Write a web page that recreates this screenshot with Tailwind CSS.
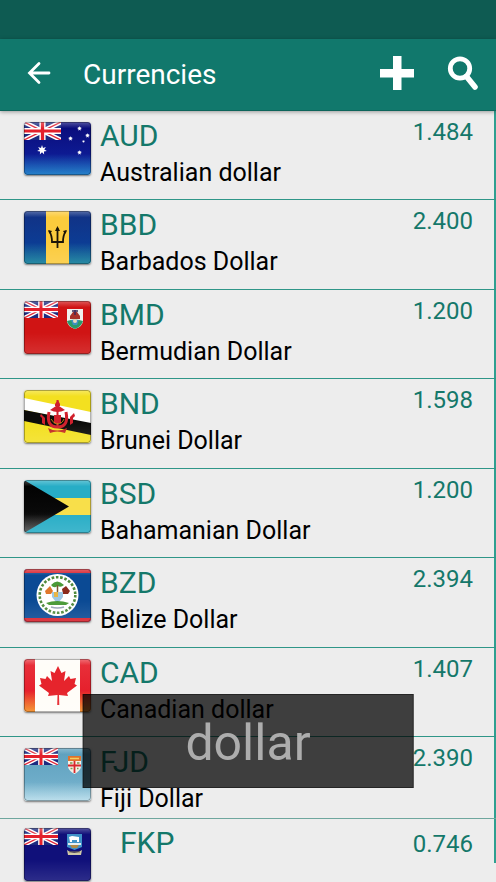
<!DOCTYPE html>
<html lang="en">
<head>
  <meta charset="UTF-8">
  <meta name="viewport" content="width=device-width, initial-scale=1">
  <title>Currencies</title>
  <script src="https://cdn.jsdelivr.net/npm/@tailwindcss/browser@4"></script>
</head>
<body class="bg-[#ededed] font-[Roboto,sans-serif] min-h-screen overflow-x-hidden">

  <!-- Shared flag parts (kept rendered at zero size so the gradients resolve) -->
  <svg class="absolute w-0 h-0" aria-hidden="true">
    <defs>
      <linearGradient id="gloss" x1="0" y1="0" x2="0" y2="1">
        <stop offset="0" stop-color="#fff" stop-opacity=".3"/>
        <stop offset=".12" stop-color="#fff" stop-opacity="0"/>
        <stop offset=".6" stop-color="#fff" stop-opacity="0"/>
        <stop offset="1" stop-color="#fff" stop-opacity=".12"/>
      </linearGradient>
      <linearGradient id="aud" x1="0" y1="0" x2="0" y2="1">
        <stop offset="0" stop-color="#0a0a78"/>
        <stop offset=".6" stop-color="#0d1a92"/>
        <stop offset="1" stop-color="#0a72c4"/>
      </linearGradient>
      <linearGradient id="bbd" x1="0" y1="0" x2="0" y2="1">
        <stop offset="0" stop-color="#123184"/>
        <stop offset=".6" stop-color="#0c3c94"/>
        <stop offset="1" stop-color="#0b7d98"/>
      </linearGradient>
      <linearGradient id="cad" x1="0" y1="0" x2="0" y2="1">
        <stop offset="0" stop-color="#e8323c"/>
        <stop offset=".6" stop-color="#e6202c"/>
        <stop offset="1" stop-color="#f48a1c"/>
      </linearGradient>
      <linearGradient id="fjd" x1="0" y1="0" x2="0" y2="1">
        <stop offset="0" stop-color="#5c9fbd"/>
        <stop offset=".65" stop-color="#6fadc9"/>
        <stop offset="1" stop-color="#b4dcea"/>
      </linearGradient>
      <linearGradient id="bsd" x1="0" y1="0" x2="0" y2="1">
        <stop offset="0" stop-color="#000"/>
        <stop offset=".65" stop-color="#0a0a0a"/>
        <stop offset="1" stop-color="#555"/>
      </linearGradient>
      <clipPath id="round"><rect width="67" height="53" rx="3"/></clipPath>
      <symbol id="jack" viewBox="0 0 36 18" preserveAspectRatio="none">
        <rect width="36" height="18" fill="#1c2a80"/>
        <path d="M0 0L36 18M36 0L0 18" stroke="#fff" stroke-width="4.4"/>
        <path d="M0 0L36 18M36 0L0 18" stroke="#e0283a" stroke-width="1.4"/>
        <path d="M18 0V18M0 9H36" stroke="#fff" stroke-width="6"/>
        <path d="M18 0V18M0 9H36" stroke="#e3202c" stroke-width="3.2"/>
      </symbol>
      <symbol id="star" viewBox="-10 -10 20 20">
        <path fill="#fff" d="M0-10L2-4.200L7.800-6.200L4.600-1L9.700 2.200L3.800 2.900L4.300 9L0 4.700L-4.300 9L-3.800 2.900L-9.700 2.200L-4.600-1L-7.800-6.200L-2-4.200Z"/>
      </symbol>
      <symbol id="finish" viewBox="0 0 67 53">
        <rect width="67" height="53" rx="3" fill="url(#gloss)"/>
        <rect x=".5" y=".5" width="66" height="52" rx="3" fill="none" stroke="#000" stroke-opacity=".3"/>
      </symbol>
    </defs>
  </svg>

  <!-- Status bar -->
  <div class="h-[39px] bg-[#0e5b52]"></div>

  <!-- Toolbar -->
  <header class="relative h-[72px] bg-[#11786c] border-b border-[#0d655b] shadow-[0_1px_4px_rgba(0,0,0,0.35)] text-white flex items-center pl-[26px] pr-4">
    <button type="button" aria-label="Back" class="mb-1">
      <svg class="w-[26px] h-[26px]" viewBox="0 0 26 26" fill="none" stroke="currentColor" stroke-width="2.800" stroke-linecap="round">
        <path d="M23 13H4M13 3.500L3.500 13L13 22.500"/>
      </svg>
    </button>
    <h1 class="ml-[31px] text-[28px] leading-9 flex-1">Currencies</h1>
    <button type="button" aria-label="Add currency" class="mb-1">
      <svg class="w-[34px] h-[34px]" viewBox="0 0 34 34" fill="currentColor">
        <path d="M13 0H21.500V13H34V21.500H21.500V34H13V21.500H0V13H13Z"/>
      </svg>
    </button>
    <button type="button" aria-label="Search" class="ml-8 mb-1">
      <svg class="w-[34px] h-[34px]" viewBox="0 0 34 34" fill="none" stroke="currentColor" stroke-linecap="round">
        <circle cx="14" cy="12.500" r="9.700" stroke-width="4.800"/>
        <path d="M20.500 20.500L29 31" stroke-width="5.600"/>
      </svg>
    </button>
  </header>

  <!-- Currency list -->
  <main>
    <ul class="text-[#14786a]">
      <li class="h-[89px] flex border-b border-[#2f9688]">
        <svg class="w-[67px] h-[53px] ml-6 mt-[11px] mr-[9px] shrink-0 rounded-[3px] shadow-[0_1px_2px_rgba(0,0,0,0.5)]" viewBox="0 0 67 53" role="img" aria-label="Australia">
          <g clip-path="url(#round)">
            <rect width="67" height="53" fill="url(#aud)"/>
            <use href="#jack" width="37" height="18"/>
            <use href="#star" x="13" y="23" width="10" height="10"/>
            <use href="#star" x="53" y="4" width="5" height="5"/>
            <use href="#star" x="44" y="14" width="5" height="5"/>
            <use href="#star" x="61" y="11" width="5" height="5"/>
            <use href="#star" x="53" y="28" width="5" height="5"/>
            <use href="#star" x="58" y="18" width="3" height="3"/>
          </g>
          <use href="#finish" width="67" height="53"/>
        </svg>
        <div class="flex-1 pt-[7px]">
          <h2 class="text-[30px] leading-9">AUD</h2>
          <p class="text-[25px] leading-[38px] text-black">Australian dollar</p>
        </div>
        <div class="text-[24px] leading-[43px] pr-[21px] border-r-2 border-[#2f9f90]">1.484</div>
      </li>

      <li class="h-[90px] flex border-b border-[#2f9688]">
        <svg class="w-[67px] h-[53px] ml-6 mt-[11px] mr-[9px] shrink-0 rounded-[3px] shadow-[0_1px_2px_rgba(0,0,0,0.5)]" viewBox="0 0 67 53" role="img" aria-label="Barbados">
          <g clip-path="url(#round)">
            <rect width="67" height="53" fill="url(#bbd)"/>
            <rect x="22" width="23" height="53" fill="#fbcb3d"/>
            <path d="M33.500 17V37M25 20Q28 24 28 31H39Q39 24 42 20" fill="none" stroke="#1c1508" stroke-width="1.800"/>
            <path d="M33.500 15L36 20H31ZM24 19L28 20L26 23ZM43 19L39 20L41 23Z" fill="#1c1508"/>
          </g>
          <use href="#finish" width="67" height="53"/>
        </svg>
        <div class="flex-1 pt-[7px]">
          <h2 class="text-[30px] leading-9">BBD</h2>
          <p class="text-[25px] leading-[38px] text-black">Barbados Dollar</p>
        </div>
        <div class="text-[24px] leading-[43px] pr-[21px] border-r-2 border-[#2f9f90]">2.400</div>
      </li>

      <li class="h-[89px] flex border-b border-[#2f9688]">
        <svg class="w-[67px] h-[53px] ml-6 mt-[11px] mr-[9px] shrink-0 rounded-[3px] shadow-[0_1px_2px_rgba(0,0,0,0.5)]" viewBox="0 0 67 53" role="img" aria-label="Bermuda">
          <g clip-path="url(#round)">
            <rect width="67" height="53" fill="#d01414"/>
            <use href="#jack" width="34" height="17"/>
            <path d="M43 8H59V20Q59 25 51 28Q43 25 43 20Z" fill="#f0f2ee"/>
            <path d="M43 20Q51 17 59 20Q58 25 51 28Q44 25 43 20Z" fill="#2a9a6a"/>
            <path d="M46 15L49 11H53L56 15V18H46Z" fill="#a8322a"/>
            <path d="M48 10H54M51 9V14" stroke="#3b2a5a" stroke-width="1.500"/>
            <path d="M47 19H55L53 24H49Z" fill="#3f8fc2"/>
            <circle cx="51" cy="20" r="2" fill="#e9d9c0"/>
          </g>
          <use href="#finish" width="67" height="53"/>
        </svg>
        <div class="flex-1 pt-[7px]">
          <h2 class="text-[30px] leading-9">BMD</h2>
          <p class="text-[25px] leading-[38px] text-black">Bermudian Dollar</p>
        </div>
        <div class="text-[24px] leading-[43px] pr-[21px] border-r-2 border-[#2f9f90]">1.200</div>
      </li>

      <li class="h-[90px] flex border-b border-[#2f9688]">
        <svg class="w-[67px] h-[53px] ml-6 mt-[11px] mr-[9px] shrink-0 rounded-[3px] shadow-[0_1px_2px_rgba(0,0,0,0.5)]" viewBox="0 0 67 53" role="img" aria-label="Brunei">
          <g clip-path="url(#round)">
            <rect width="67" height="53" fill="#f3e020"/>
            <path d="M0 8L67 22V34L0 20Z" fill="#fff"/>
            <path d="M0 20L67 33V45L0 31Z" fill="#0c0c0a"/>
            <path d="M25 22Q22 37 33.500 37Q45 37 42 22" fill="none" stroke="#d0202c" stroke-width="3"/>
            <path d="M33.500 10V37" stroke="#d0202c" stroke-width="2"/>
            <path d="M31 14L34 10L36 14V16H31ZM26 20L33.500 15L41 20Q33.500 24 26 20Z" fill="#d0202c"/>
            <path d="M30 25H37V33H30Z" fill="#d0202c"/>
            <path d="M24 38Q33 43 43 38L41 43Q33 40 26 43Z" fill="#c42a22"/>
            <path d="M17 24L21 28V35L18 33V28L16 26ZM50 23L46 27V35L49 33V28L51 26Z" fill="#d0202c"/>
            <path d="M27 29Q30 34 33 34Q38 34 40 29" fill="none" stroke="#e8a020" stroke-width=".8"/>
          </g>
          <use href="#finish" width="67" height="53"/>
        </svg>
        <div class="flex-1 pt-[7px]">
          <h2 class="text-[30px] leading-9">BND</h2>
          <p class="text-[25px] leading-[38px] text-black">Brunei Dollar</p>
        </div>
        <div class="text-[24px] leading-[43px] pr-[21px] border-r-2 border-[#2f9f90]">1.598</div>
      </li>

      <li class="h-[89px] flex border-b border-[#2f9688]">
        <svg class="w-[67px] h-[53px] ml-6 mt-[11px] mr-[9px] shrink-0 rounded-[3px] shadow-[0_1px_2px_rgba(0,0,0,0.5)]" viewBox="0 0 67 53" role="img" aria-label="Bahamas">
          <g clip-path="url(#round)">
            <rect width="67" height="53" fill="#27adc6"/>
            <rect y="18" width="67" height="17" fill="#f8df4a"/>
            <path d="M0 0L45 26.500L0 53Z" fill="url(#bsd)"/>
          </g>
          <use href="#finish" width="67" height="53"/>
        </svg>
        <div class="flex-1 pt-[7px]">
          <h2 class="text-[30px] leading-9">BSD</h2>
          <p class="text-[25px] leading-[38px] text-black">Bahamanian Dollar</p>
        </div>
        <div class="text-[24px] leading-[43px] pr-[21px] border-r-2 border-[#2f9f90]">1.200</div>
      </li>

      <li class="h-[90px] flex border-b border-[#2f9688]">
        <svg class="w-[67px] h-[53px] ml-6 mt-[11px] mr-[9px] shrink-0 rounded-[3px] shadow-[0_1px_2px_rgba(0,0,0,0.5)]" viewBox="0 0 67 53" role="img" aria-label="Belize">
          <g clip-path="url(#round)">
            <rect width="67" height="53" fill="#0b4a94"/>
            <path d="M0 0H67V4H0ZM0 49H67V53H0Z" fill="#d8202c"/>
            <circle cx="33.500" cy="26" r="21" fill="#fff"/>
            <circle cx="33.500" cy="26" r="17.800" fill="none" stroke="#4f8a3c" stroke-width="2.600" stroke-dasharray="2.600 1.700"/>
            <path d="M27 16Q33 9 40 16Q37 19 33.500 17Q30 20 27 16Z" fill="#4a9a38"/>
            <path d="M33.500 16V28" stroke="#7a5a30" stroke-width="1.500"/>
            <path d="M21 22L26 17L29 22L27 25H22Z" fill="#e0782c"/>
            <path d="M38 20L42 17L46 22L44 25H39Z" fill="#8a2a1c"/>
            <path d="M28 23H39V28L33.500 35L28 28Z" fill="#9fc8e4"/>
            <path d="M30 23H34V28H30Z" fill="#e8b648"/>
            <path d="M22 34Q33 30 45 34L42 36H25Z" fill="#4a9a38"/>
            <path d="M27 38Q33.500 40 40 38" fill="none" stroke="#9aa6b8" stroke-width="1.500"/>
          </g>
          <use href="#finish" width="67" height="53"/>
        </svg>
        <div class="flex-1 pt-[7px]">
          <h2 class="text-[30px] leading-9">BZD</h2>
          <p class="text-[25px] leading-[38px] text-black">Belize Dollar</p>
        </div>
        <div class="text-[24px] leading-[43px] pr-[21px] border-r-2 border-[#2f9f90]">2.394</div>
      </li>

      <li class="h-[89px] flex border-b border-[#2f9688]">
        <svg class="w-[67px] h-[53px] ml-6 mt-[11px] mr-[9px] shrink-0 rounded-[3px] shadow-[0_1px_2px_rgba(0,0,0,0.5)]" viewBox="0 0 67 53" role="img" aria-label="Canada">
          <g clip-path="url(#round)">
            <rect width="67" height="53" fill="url(#cad)"/>
            <rect x="11" width="45" height="53" fill="#fffdf8"/>
            <path fill="#e6242c" d="M34 7L37.500 14L41.500 12L40 22L45 17L46.500 20L52 19L50.500 25L53 26.500L43 34L44 37L35 36L35.300 46H33.200L33.500 36L24 37L25 34L15 26.500L17.500 25L16 19L21.500 20L23 17L28 22L26.500 12L30.500 14Z"/>
          </g>
          <use href="#finish" width="67" height="53"/>
        </svg>
        <div class="flex-1 pt-[7px]">
          <h2 class="text-[30px] leading-9">CAD</h2>
          <p class="text-[25px] leading-[38px] text-black">Canadian dollar</p>
        </div>
        <div class="text-[24px] leading-[43px] pr-[21px] border-r-2 border-[#2f9f90]">1.407</div>
      </li>

      <li class="h-[82px] flex border-b border-[#6fa79e]">
        <svg class="w-[67px] h-[53px] ml-6 mt-[11px] mr-[9px] shrink-0 rounded-[3px] shadow-[0_1px_2px_rgba(0,0,0,0.5)]" viewBox="0 0 67 53" role="img" aria-label="Fiji">
          <g clip-path="url(#round)">
            <rect width="67" height="53" fill="url(#fjd)"/>
            <use href="#jack" width="34" height="17"/>
            <path d="M44 8H57V19Q56 23 50.500 26Q45 23 44 19Z" fill="#f4f0e6"/>
            <path d="M44 8H57V13H44Z" fill="#e0722c"/>
            <path d="M50.500 13V25M44 17.500H57" stroke="#d8282c" stroke-width="1.800"/>
            <path d="M46 10.500H55" stroke="#f4d060" stroke-width="1.400"/>
            <path d="M46 15H48.500M53 15H55.500M46.500 20.500H48.500M53 20.500H54.500" stroke="#7a9a50" stroke-width="1.600"/>
          </g>
          <use href="#finish" width="67" height="53"/>
        </svg>
        <div class="flex-1 pt-[7px]">
          <h2 class="text-[30px] leading-9">FJD</h2>
          <p class="text-[25px] leading-[38px] text-black">Fiji Dollar</p>
        </div>
        <div class="text-[24px] leading-[43px] pr-[21px] border-r-2 border-[#2f9f90]">2.390</div>
      </li>

      <li class="h-[63px] flex items-start">
        <svg class="w-[67px] h-[53px] ml-6 mt-[9px] mr-[9px] shrink-0 rounded-[3px] shadow-[0_1px_2px_rgba(0,0,0,0.5)]" viewBox="0 0 67 53" role="img" aria-label="Falkland Islands">
          <g clip-path="url(#round)">
            <rect width="67" height="53" fill="#10107a"/>
            <use href="#jack" width="34" height="17"/>
            <path d="M43 6H58V19L50.500 22L43 19Z" fill="#3f92c8"/>
            <path d="M45 9L48 8L55 9V14H53V12H48V14H46Z" fill="#fff"/>
            <path d="M44 15H57V17H44Z" fill="#e6eef2"/>
            <path d="M46 17H55L53 20H48Z" fill="#b08a48"/>
            <path d="M43 22Q50 28 58 22L57 27H44Z" fill="#cfc9a8"/>
            <path d="M45 24H56" stroke="#8a7a50"/>
          </g>
          <use href="#finish" width="67" height="53"/>
        </svg>
        <h2 class="flex-1 pl-5 pt-1.5 text-[30px] leading-9">FKP</h2>
        <div class="h-11 text-[24px] leading-[51px] pr-[21px] border-r-2 border-[#2f9f90]">0.746</div>
      </li>
    </ul>
  </main>

  <!-- Toast -->
  <div role="status" class="fixed bottom-[94px] left-1/2 -translate-x-1/2 w-2/3 h-[94px] pt-1 flex items-center justify-center bg-black/74 border border-black/40 text-[#adadad] text-[50px]">dollar</div>

</body>
</html>
